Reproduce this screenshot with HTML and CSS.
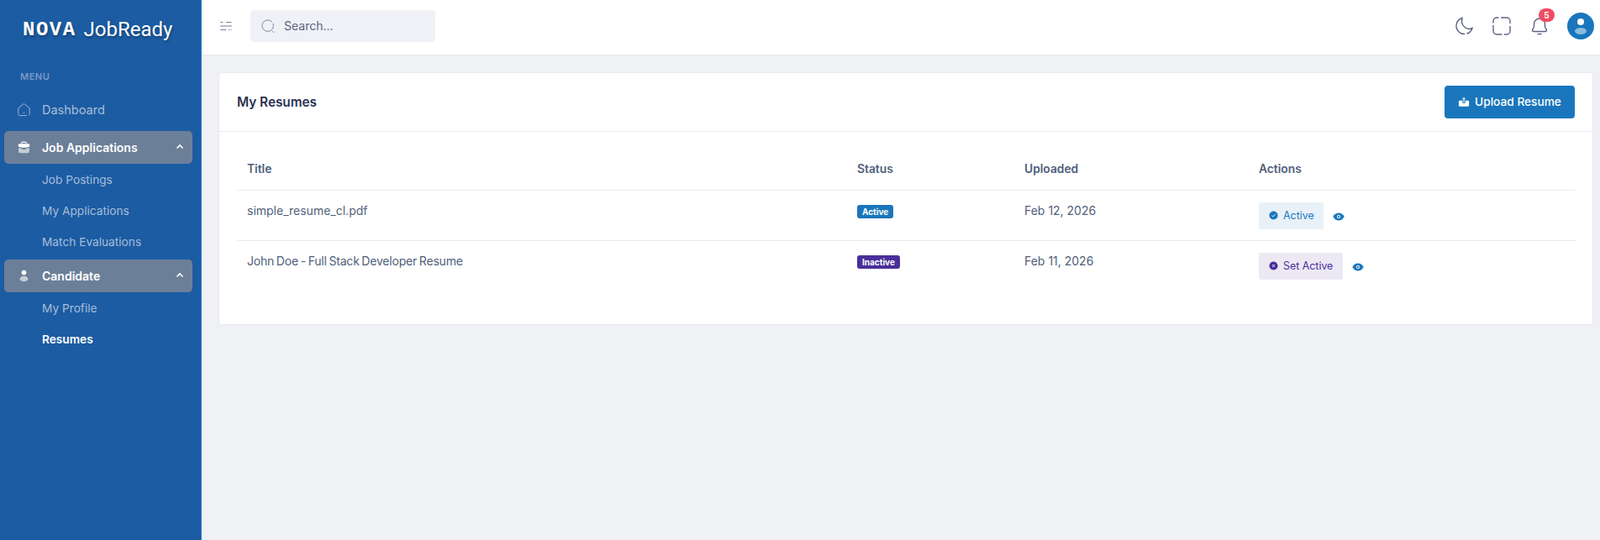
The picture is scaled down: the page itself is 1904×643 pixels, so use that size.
FILE: index.html
```html
<!DOCTYPE html>
<html lang="en">
<head>
<meta charset="utf-8">
<title>My Resumes</title>
<link rel="stylesheet" href="styles.css">
</head>
<body>
<aside class="sidebar">
  <div class="logo"><span class="logo-nova">NOVA</span> <span>JobReady</span></div>
  <div class="menu-label">MENU</div>
  <nav class="nav">
    <a class="nav-item">
      <svg class="nav-icon" viewBox="0 0 24 24" fill="none" stroke="currentColor" stroke-width="1.300"><path d="M2.500 9.500 11 2.800a1.700 1.700 0 0 1 2 0l8.500 6.700V19a3 3 0 0 1-3 3h-13a3 3 0 0 1-3-3z" stroke-dasharray="36 3 40"/><circle cx="12" cy="17.500" r="1" fill="currentColor" stroke="none"/></svg>
      <span>Dashboard</span>
    </a>
    <a class="nav-group">
      <svg class="nav-icon" viewBox="0 0 24 24"><path d="M8 6V5a2 2 0 0 1 2-2h4a2 2 0 0 1 2 2v1" fill="none" stroke="#fff" stroke-width="1.600"/><path d="M2.500 8a2 2 0 0 1 2-2h15a2 2 0 0 1 2 2v2.500l-6.500 2h-6l-6.500-2z" fill="#fff"/><path d="M3 12.500l6 1.700v1.300h6v-1.300l6-1.700v6.500a2.500 2.500 0 0 1-2.500 2.500h-13A2.500 2.500 0 0 1 3 19z" fill="#fff" opacity=".6"/></svg>
      <span class="nav-group-text">Job Applications</span>
      <svg class="chev" viewBox="0 0 12 12" fill="none" stroke="#fff" stroke-width="1.600"><path d="M2.500 7.500 6 4l3.500 3.500"/></svg>
    </a>
    <a class="nav-sub">Job Postings</a>
    <a class="nav-sub">My Applications</a>
    <a class="nav-sub">Match Evaluations</a>
    <a class="nav-group">
      <svg class="nav-icon" viewBox="0 0 24 24"><circle cx="12" cy="6.500" r="4" fill="#fff"/><ellipse cx="12" cy="17" rx="7" ry="4.500" fill="#fff" opacity=".6"/></svg>
      <span class="nav-group-text">Candidate</span>
      <svg class="chev" viewBox="0 0 12 12" fill="none" stroke="#fff" stroke-width="1.600"><path d="M2.500 7.500 6 4l3.500 3.500"/></svg>
    </a>
    <a class="nav-sub">My Profile</a>
    <a class="nav-sub nav-sub-active">Resumes</a>
  </nav>
</aside>
<div class="main">
  <header class="topbar">
    <svg class="toggle" viewBox="0 0 20 14" fill="none" stroke="#6b7394" stroke-width="1.200"><path d="M10 1.500h8M1.500 1.500h4M1.500 7h17M1.500 12.500h9M14 12.500h2M17.500 12.500h1"/></svg>
    <div class="search">
      <svg class="search-icon" viewBox="0 0 24 24" fill="none" stroke="#7d7f9e" stroke-width="1.300"><circle cx="11.500" cy="11.500" r="9" stroke-dasharray="50 2.500"/><path d="M19 20 21.500 22.500"/></svg>
      <span class="search-text">Search...</span>
    </div>
    <div class="top-actions">
      <svg class="top-icon" viewBox="0 0 24 24" fill="none" stroke="#5d6485" stroke-width="1.400"><path d="M10 2.500A9.700 9.700 0 1 0 22 14.500C16 17.500 7.500 12 10 2.500z" stroke-dasharray="28 2 40"/></svg>
      <svg class="top-icon" viewBox="0 0 24 24" fill="none" stroke="#5d6485" stroke-width="1.400"><path d="M2 8.500V6a4 4 0 0 1 4-4h2.500M11 2h7a4 4 0 0 1 4 4v3M22 12v6a4 4 0 0 1-4 4h-3M12.500 22H6a4 4 0 0 1-4-4v-7"/></svg>
      <div class="bell">
        <svg class="top-icon" viewBox="0 0 24 24" fill="none" stroke="#5d6485" stroke-width="1.400"><path d="M12 3a6.500 6.500 0 0 0-6.500 6.500v3c0 1.500-2 3.500-2 4.500 0 .8.600 1.500 1.500 1.500h14c.9 0 1.500-.7 1.500-1.500 0-1-2-3-2-4.500v-3A6.500 6.500 0 0 0 12 3z"/><path d="M9.500 21.500h5"/></svg>
        <span class="badge-count">5</span>
      </div>
      <div class="avatar">
        <svg viewBox="0 0 32 32"><circle cx="16" cy="11" r="4" fill="#fff"/><ellipse cx="16" cy="22" rx="7" ry="4" fill="#fff" opacity=".5"/></svg>
      </div>
    </div>
  </header>
  <main class="content">
    <section class="card">
      <div class="card-head">
        <h1 class="card-title">My Resumes</h1>
        <button class="upload-btn">
          <svg class="upload-icon" viewBox="0 0 16 16"><path d="M1 8a1.500 1.500 0 0 1 1.500-1.500H6V10h4V6.500h3.500A1.500 1.500 0 0 1 15 8v5a1.500 1.500 0 0 1-1.500 1.500h-11A1.500 1.500 0 0 1 1 13z" fill="#fff"/><path d="M8 1.500 11 5H9v4H7V5H5z" fill="#fff" opacity=".65"/></svg>
          Upload Resume
        </button>
      </div>
      <div class="card-body">
        <table class="table">
          <colgroup><col class="c1"><col class="c2"><col class="c3"><col></colgroup>
          <thead>
            <tr><th>Title</th><th>Status</th><th>Uploaded</th><th>Actions</th></tr>
          </thead>
          <tbody>
            <tr>
              <td>simple_resume_cl.pdf</td>
              <td><span class="pill pill-blue">Active</span></td>
              <td>Feb 12, 2026</td>
              <td class="actions">
                <span class="act act-blue"><svg class="act-icon" viewBox="0 0 12 12"><circle cx="6" cy="6" r="5.500" fill="#1a76bc"/><path d="M3.800 6.200 5.300 7.600 8.200 4.600" fill="none" stroke="#fff" stroke-width="1"/></svg>Active</span>
                <svg class="eye" viewBox="0 0 14 10"><path d="M0.300 5C2 1.800 4.300 .4 7 .4S12 1.800 13.700 5C12 8.200 9.700 9.600 7 9.600S2 8.200 .3 5z" fill="#1a76bc"/><circle cx="7" cy="5" r="2.200" fill="#cfe3f2"/><circle cx="7" cy="5" r="1.100" fill="#1a76bc"/></svg>
              </td>
            </tr>
            <tr>
              <td class="tight">John Doe - Full Stack Developer Resume</td>
              <td><span class="pill pill-purple">Inactive</span></td>
              <td>Feb 11, 2026</td>
              <td class="actions">
                <span class="act act-purple"><svg class="act-icon" viewBox="0 0 12 12"><circle cx="6" cy="6" r="5.500" fill="#4a2f98"/><path d="M4.300 4.300 7.700 7.700M7.700 4.300 4.300 7.700" fill="none" stroke="#fff" stroke-width="1"/></svg>Set Active</span>
                <svg class="eye" viewBox="0 0 14 10"><path d="M0.300 5C2 1.800 4.300 .4 7 .4S12 1.800 13.700 5C12 8.200 9.700 9.600 7 9.600S2 8.200 .3 5z" fill="#1a76bc"/><circle cx="7" cy="5" r="2.200" fill="#cfe3f2"/><circle cx="7" cy="5" r="1.100" fill="#1a76bc"/></svg>
              </td>
            </tr>
          </tbody>
        </table>
      </div>
    </section>
  </main>
</div>
</body>
</html>
```
FILE: styles.css
```css
* { box-sizing: border-box; }
html, body { margin: 0; height: 100%; }
body {
  display: flex;
  height: 643px;
  overflow: hidden;
  background: #f0f1f4;
  font-family: "Inter", "Liberation Sans", sans-serif;
  color: #4f5f7a;
}
.sidebar {
  width: 240px;
  flex: none;
  background: #1c5ca2;
  border-right: 1px solid #2f80d8;
  padding: 0 10px 0 5px;
}
.logo {
  height: 66px;
  padding: 4px 0 0 22px;
  display: flex;
  align-items: center;
  gap: 9px;
  color: #fff;
  font-size: 24px;
  font-family: "Roboto", sans-serif;
  text-shadow: 1px 2px 3px rgba(0, 0, 0, .3);
}
.logo-nova {
  font-weight: 700;
  font-family: "Liberation Mono", monospace;
  font-size: 24px;
  letter-spacing: 1.500px;
}
.menu-label {
  margin-top: 19px;
  padding-left: 19px;
  height: 13px;
  line-height: 13px;
  font-size: 11px;
  font-weight: 600;
  letter-spacing: .5px;
  color: #7a9ac6;
}
.nav { margin-top: 7px; display: flex; flex-direction: column; }
.nav-item, .nav-group {
  height: 39px;
  display: flex;
  align-items: center;
  padding-left: 15px;
  border-radius: 5px;
}
.nav-item {
  color: #a6bcdb;
  height: 40px;
  margin-top: 5px;
  margin-bottom: 6px;
  font-size: 14.500px;
}
.nav-group {
  width: 224px;
  background: #6c7f99;
  color: #fff;
  font-size: 14px;
  font-weight: 600;
  padding-bottom: 1px;
}
.nav-sub + .nav-group { margin-top: 3px; }
.nav-icon { width: 17px; height: 17px; margin-right: 13px; flex: none; }
.nav-group-text { flex: 1; }
.chev { width: 12px; height: 12px; margin-right: 9px; }
.nav-sub {
  height: 37px;
  display: flex;
  align-items: center;
  padding: 1px 0 0 45px;
  font-size: 13.700px;
  color: #a6bcdb;
}
.nav-sub-active { color: #fff; font-weight: 600; }
.main { flex: 1; display: flex; flex-direction: column; min-width: 0; }
.topbar {
  height: 66px;
  flex: none;
  background: #fff;
  border-bottom: 1px solid #e6e8ee;
  display: flex;
  align-items: center;
  padding: 0 7px 4px 21px;
}
.toggle { width: 16px; height: 12px; flex: none; }
.search {
  margin-left: 21px;
  width: 220px;
  height: 38px;
  background: #f0f1f7;
  border-radius: 4px;
  display: flex;
  align-items: center;
  padding-left: 12px;
}
.search-icon { width: 18px; height: 18px; margin-right: 10px; }
.search-text { font-size: 14px; color: #5c6480; }
.top-actions { margin-left: auto; display: flex; align-items: center; gap: 21px; }
.top-icon { width: 24px; height: 24px; display: block; }
.bell { position: relative; }
.badge-count {
  position: absolute;
  top: -9px;
  left: 11px;
  width: 19px;
  height: 16px;
  border-radius: 8px;
  background: #ef4c63;
  color: #fff;
  font-size: 10px;
  font-weight: 700;
  line-height: 16px;
  text-align: center;
}
.avatar {
  width: 32px;
  height: 32px;
  border-radius: 50%;
  background: #1a76bc;
}
.avatar svg { display: block; }
.content { padding: 20px 8px 0 20px; }
.card {
  height: 301px;
  background: #fff;
  border: 1px solid #e8eaf0;
  border-radius: 4px;
}
.card-head {
  height: 70px;
  display: flex;
  align-items: center;
  justify-content: space-between;
  padding: 0 21px 1px 21px;
  border-bottom: 1px solid #e8eaf0;
}
.card-title { margin: 0; font-size: 15.300px; font-weight: 600; color: #2a3252; }
.upload-btn {
  width: 155px;
  height: 39px;
  border: 0;
  border-radius: 4px;
  background: #1a76bc;
  color: #fff;
  font: 500 13.700px "Inter", sans-serif;
  display: flex;
  align-items: center;
  justify-content: center;
  gap: 6px;
}
.upload-icon { width: 14px; height: 14px; }
.card-body { padding: 20px 20px 20px 21px; }
.table { width: 100%; border-collapse: collapse; table-layout: fixed; font-size: 14px; }
.c1 { width: 726px; }
.c2 { width: 199px; }
.c3 { width: 279px; }
.table th {
  height: 49px;
  padding: 0 12px;
  text-align: left;
  font-size: 13.800px;
  font-weight: 600;
  color: #4f5f7a;
  border-bottom: 1px solid #e8eaf0;
}
.table td {
  height: 60px;
  padding: 15px 12px 0;
  vertical-align: top;
  color: #4f5f7a;
}
.table td.tight { letter-spacing: -.2px; word-spacing: -1px; }
.table tbody tr:first-child td { border-bottom: 1px solid #e8eaf0; }
.pill {
  display: inline-flex;
  align-items: center;
  height: 16px;
  margin-top: 2px;
  padding: 0 6px;
  border-radius: 3px;
  color: #fff;
  font-size: 10px;
  font-weight: 700;
}
.pill-blue { background: #1a76bc; }
.pill-purple { background: #4a2f98; }
.table td.actions { padding-top: 14px; }
.actions { font-size: 0; white-space: nowrap; }
.act {
  display: inline-flex;
  align-items: center;
  height: 32px;
  padding: 0 11.500px 0 12px;
  border-radius: 3px;
  font-size: 12.400px;
  vertical-align: top;
}
.act-blue { background: #e8f1f8; color: #1a76bc; }
.act-purple { background: #ece9f5; color: #4a2f98; }
.act-icon { width: 11px; height: 11px; margin-right: 6px; }
.eye { width: 14px; height: 10px; margin-left: 11px; margin-top: 12px; vertical-align: top; }
```
